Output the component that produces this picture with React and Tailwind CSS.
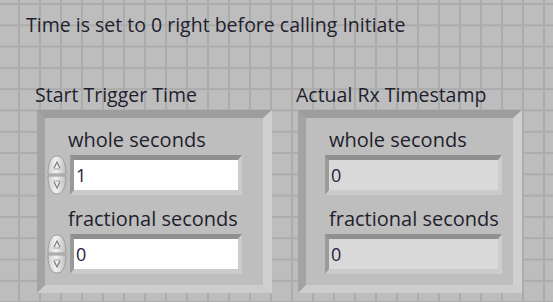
import React from 'react'

const font = { fontFamily: '"Open Sans", "Noto Sans", sans-serif' }

const Spinner = () => (
  <svg width="22" height="40" viewBox="0 0 22 40" className="shrink-0">
    <defs>
      <linearGradient id="spinFill" x1="0" y1="0" x2="1" y2="0">
        <stop offset="0" stopColor="#cfcfcf" />
        <stop offset="0.45" stopColor="#f2f2f2" />
        <stop offset="1" stopColor="#bdbdbd" />
      </linearGradient>
    </defs>
    <path d="M2 19 C2 6 6 1 11 1 C16 1 20 6 20 19 Z" fill="url(#spinFill)" stroke="#9c9c9c" strokeWidth="1" />
    <path d="M2 21 C2 34 6 39 11 39 C16 39 20 34 20 21 Z" fill="url(#spinFill)" stroke="#9c9c9c" strokeWidth="1" />
    <path d="M8 13 L11 7 L14 13" fill="none" stroke="#7a7a7a" strokeWidth="1.2" />
    <path d="M7.5 14 L14.5 14" stroke="#a0a0a0" strokeWidth="1" />
    <path d="M7.5 26 L14.5 26" stroke="#a0a0a0" strokeWidth="1" />
    <path d="M8 27 L11 33 L14 27" fill="none" stroke="#7a7a7a" strokeWidth="1.2" />
  </svg>
)

const Field = ({ value, indicator }) => (
  <div
    className={`flex items-center h-[40px] border-t-[5px] border-l-[4px] border-r-[4px] border-b-[5px] border-t-[#8f8f8f] border-l-[#9a9a9a] border-r-[#cdcdcd] border-b-[#cbcbcb] ${
      indicator ? 'w-[177px] bg-[#d9d9d9]' : 'w-[172px] bg-white'
    }`}
  >
    <span className="pl-[2px] text-[18px] text-[#23233a] leading-none">{value}</span>
  </div>
)

const Cluster = ({ title, rows, indicator, width }) => (
  <div className="flex flex-col">
    <div className="h-[27px] text-[19.5px] text-[#1f1f2e] leading-[24px] -ml-[2px] whitespace-nowrap" style={font}>
      {title}
    </div>
    <div
      className={`${width} h-[183px] bg-[#bebebe] border-t-[8px] border-l-[8px] border-r-[9px] border-b-[8px] border-t-[#9d9d9d] border-l-[#a3a3a3] border-r-[#d0d0d0] border-b-[#cdcdcd] pt-[10px]`}
    >
      {rows.map((r) => (
        <div key={r.label} className="flex flex-col mb-[12px]">
          <div className="pl-[23px] h-[27px] text-[20px] text-[#1f1f2e] leading-[24px] whitespace-nowrap" style={font}>
            {r.label}
          </div>
          <div className={`flex items-center ${indicator ? 'pl-[19px]' : 'pl-[1px] gap-[2px]'}`}>
            {!indicator && <Spinner />}
            <Field value={r.value} indicator={indicator} />
          </div>
        </div>
      ))}
    </div>
  </div>
)

export default function App() {
  return (
    <div
      className="w-[553px] h-[302px] overflow-hidden bg-[#bdbdbd] bg-[linear-gradient(to_right,#acacac_2px,transparent_2px),linear-gradient(to_bottom,#acacac_2px,transparent_2px)] bg-[size:21px_21.3px] bg-[position:18px_3px] pl-[26px] pt-[12px]"
      style={font}
    >
      <div className="text-[19.5px] text-[#1f1f2e] leading-[26px] whitespace-nowrap">
        Time is set to 0 right before calling Initiate
      </div>
      <div className="flex gap-[26px] mt-[45px] pl-[11px]">
        <Cluster
          title="Start Trigger Time"
          width="w-[235px]"
          rows={[
            { label: 'whole seconds', value: '1' },
            { label: 'fractional seconds', value: '0' },
          ]}
        />
        <Cluster
          title="Actual Rx Timestamp"
          width="w-[224px]"
          indicator
          rows={[
            { label: 'whole seconds', value: '0' },
            { label: 'fractional seconds', value: '0' },
          ]}
        />
      </div>
    </div>
  )
}
